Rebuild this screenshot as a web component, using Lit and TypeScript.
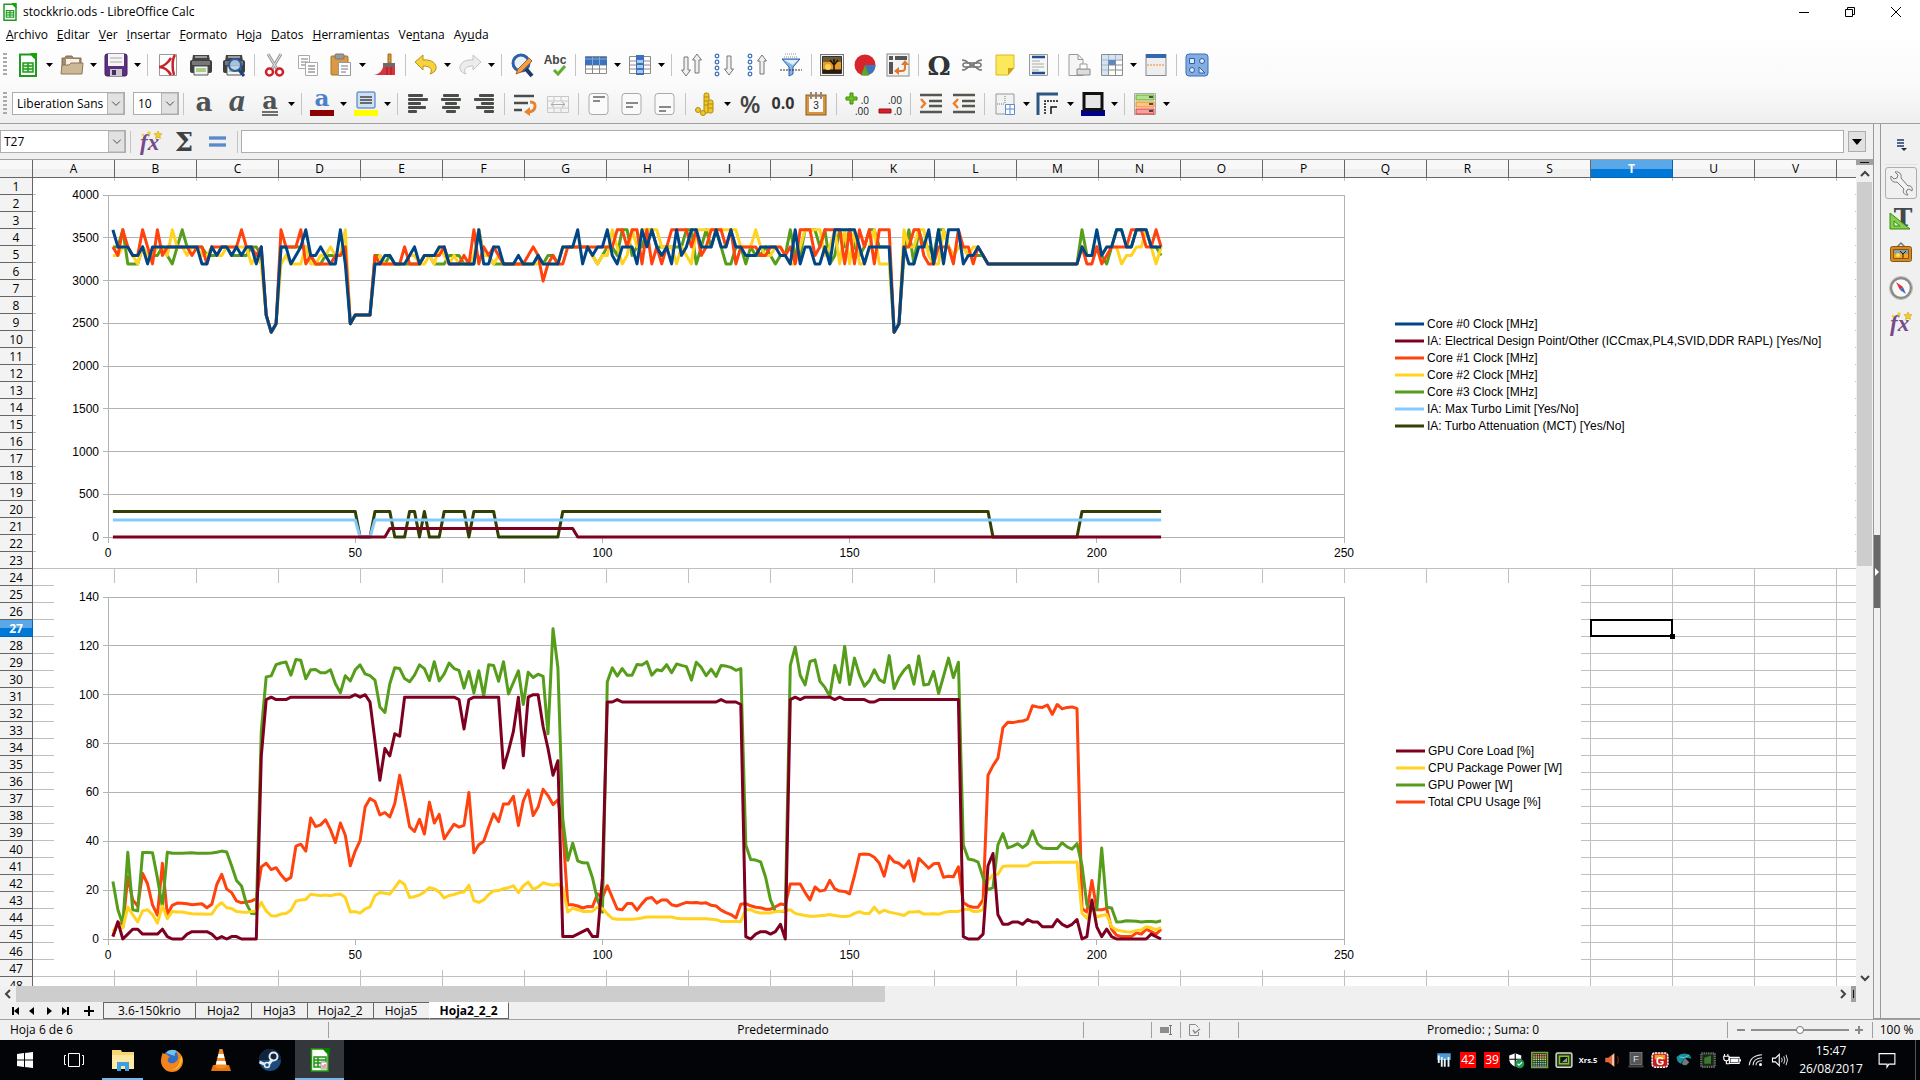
import { LitElement, html, svg, css, nothing } from "lit";
import { customElement, property } from "lit/decorators.js";
import { classMap } from "lit/directives/class-map.js";

/* ---------- measurements ---------- */

/** Expands "34*3 33" to [34, 34, 34, 33]. */
const run = (text: string, factor = 1): number[] =>
  text.trim().split(/\s+/).flatMap((part) => {
    const [value, count] = part.split("*");
    return Array(Number(count ?? 1)).fill(Number(value) * factor);
  });

const core0 = run(`36 34*3 33*2 34 32 34*2  34*8 32*2  34 33 34*2 33 34 33 34*2 32
 34 26 24 25 34*2 32 33 34 36  33*2 34 33 32*2 36 32 25 26  26*3 32*2 33*2 32*3
 33 34 32 33*3 34*2 32*2  32*4 36 32*2 34*2 32  32*2 33 32*3 33 32*3  32 34*3 36 32 34 33 34*2
 36 33 32 34*3 32 36 34 36  34 33 34 32 36 33 34 36*2 34  34*2 36 34*2 36 34*2 33*2
 33 34*4 33*2 32 36 32  34*2 32*2 34 32 36*4  36 34 32 34*5 24 25  34 32*2 34*2 36 32 36 32 36
 36*2 32 33*2 34 33 32*3  32*10  32*6 34 33*2 36  33 34*2 36*2 34*2 36*3 34*3`, 99.8);

const core1 = run(`34 33 36 34 33*2 36 34 32 36  33 34*5 33 34*2 32  34*6 36 34*2 33
 34 26 24 25 36 34*3 36 32  33 32*4 33*2 34 25 26  26*3 33 32*5 34
 32*3 33*4 34 32*2  32 33 32 36 32 34 33 34 33 32  32*4 33 34 33 30 32 33  32*2 34*8
 34*2 36*2 34 36*2 32 36 32  34 32 34 36*4 34 36 33  34 36*3 34 36 32 34*3
 34 33*2 34*3 33 34 32 36  36*2 33 34 36*4 32 36  32 36 34 36 32 36*3 24 25  34*2 36*2 33 32*2 34*3
 32 36 34*2 32 34 33 32*3  32*10  32*6 34 32*2 34  32 33 34*4 36*3 34*2 36 34`, 99.8);

const core2 = run(`33*2 34*2 33 32 34 33*2 34  34 33 36 34*2 33 34*2 33*2  34 33*2 34*5 32 33
 32 26 24 25 32 33 32*3 34  32*2 33*2 34 33*2 36 25 26  26*3 32 33 32*5
 33*2 32*2 33 32 34 33 32 33  32*3 33 36 33*2 32 33 32  32*10  32 34*6 33 32 33
 33 36 34 32 33 36 34 36*3  36 34*3 32 34 33 32 36*2  36*7 34*3
 36 34 33*2 34*2 33 32*2 34  36*4 33 34 36 32 36 32  36 32*2 34 36 32*3 24 25  36 34*2 36*2 33 32*2 36 34
 33 34*2 33 34*2 33 32*3  32*10  32*6 34 33*2 34  33 34*3 32 33*2 34*2 36 34 32 34`, 99.8);

const core3 = run(`34*2 36 32*3 34 33*3  34 33 32 34 36 34*4 33  33*2 34*2 33*4 34*2
 33 26 24 25 34*6  33 32*2 33*4 34 25 26  26*3 33*2 32 33 32*3
 32*3 33*2 32*3 33*2  33 32*3 36 33*2 32*3  32*6 33 32 33*2  32 34*6 33 32 33
 34*2 33 36*2 33 34*2 36*2  34*6 36*2 32 34  36 34 36 34 32*2 34*2 32 34
 33*2 34 33 32 33*2 36 33*2  36*3 34 36 32 33 36 34 36  34 33 34 36*2 34*3 24 25  33 36 32 36 34*2 33 36*2 34
 33 34*2 33*4 32*3  32*10  32*6 36 33*2 34  33 32 34 36*2 34*2 36*3 34*2 33`, 99.8);

const designPoint = run("0*56 100*38 0*119");
const maxTurbo = run("200*50 0*3 200*160");
const attenuation = run("300*50 0*3 300*4 0*3 300*2 0 300 0*3 300*5 0 300*5 0*13 300*87 0*18 300*17");

const gpuLoad = run(`1 7 0 2 4 4 2*4  4 1 0*3 2 3*4  2 0 1 0 1 1 0*4
 75 98 99 98*3 99*4  99*9 100  99 100 97 81 65 78 75 84 83 99  99*10
 98 86 98 99*6 70  77 85 99 75 99 100 100 87 78 67  73 1 1 1 2 3 4 1 1 25
 97 97 98 97*7  97*10  97*3 98 97*3 96 1 0  2 3 3 2 3 6 0 98 99 98
 99*6 98 99 98*2  98*3 97*2 98*5  98*10  98*2 1 0*3 2 30 35 10
 6 6 7 7 6 8 7 7 5 5  5 8 6 5 6 8 0 1 16 5  1 4 1 0*7 2 1 0`);

const gpuPower = run(`23.5 12 6 35.5 12 11.5 35.4 35.4 35.3 25  13 35.5 35.1*3 35.2 35.3 35.1*3
 35.2 35.5 36 35.6 30 24 21.7 14.5 10.5 10.3  85 107.3 107.7 112.3 113 113.4 108 114.4 114.1 106.5
 110.2 110.3 109 109 110.2 104.5 100.8 107.8 105.6 110.2  112.2 108.5 107.8 106 95 92.7 104.5 111 110.7 106.6
 105.3 108 112.2 110.7 105.8 113.5 105.6 108.5 113 110.7  110 102.7 109.5 100.8 109.8 99.5 112.3 112 105.5 113.5
 100.3 105 109.8 96 109.2 107 108.4 107.5 84 127  111 49 32.2 39.2 32 31.2 31.1 25 16 11
 105.3 111 107.6 110.7 108 108 112.4 112.2 113.5 108  110.2 109.8 112.3 109 112.6 112 111.5 106 113.3 111.2
 107.8 110.5 107.5 112 111.7 111.2 110 110.7 38.5 32.6  32.3 31.6 25.3 16 11.2 11.3 11.4 112 119.5 108
 104 113.6 114.3 105.5 103 99.5 112 105 119.8 104.2  115 108 103.5 105.8 110.2 106.2 105 116 102.5 107
 110 112 104.3 115.8 104 104.3 109.5 100.5 107.5 115  107 113.3 38.5 32.7 32.4 31.5 25 20.2 21 38.5
 43.2 37.3 38 39 37.4 39 44.3 39 37.3 37  37 37 39.4 37.7 36.8 39 30 14 12 12
 37.2 13 12.7 7 7.1 7.5 7.4 7.3 7 7.2 7.2 6.9 7.5`);

const cpuUsage = run(`1 7 5 25.5 16 13.5 26.8 22.5 14 9.8  31 10 13.8 14.7 14.6 14.4 14 14.2 14.4 12.8
 14.2 22.3 26.5 20.5 19 15.6 14.8 15.2 15.5 16.5  29.5 31 28.4 29.2 26.3 24 25.2 38 38.8 36
 49.5 46 46.7 48.8 44.8 39.5 47.5 42.5 30 36  40.3 54 57.5 56.3 50.8 51.8 50 55.5 67 57
 46 44 49 43 56 47.5 51 41 44 47  45.8 46.5 60 35.3 38.6 40 45.8 51.2 48 55.3
 55.3 58.4 46.5 56.5 61 50.5 54 61.3 58.7 55  57 45 14 14 13.5 12.7 13.3 13.2 18.5 17
 21.8 17 12.3 12 14.5 14.5 11.8 14.5 16.6 17  14.7 16 16 14 13.5 14.3 15 14.8 15 14.6
 14.8 13.8 13.5 11.8 10.8 10 8.6 14.2 14.5 13.6  13 12.8 12.2 12.2 13.2 14.3 14 22.5 22.5 22.5
 19 16 21.3 19.6 20 24 20.5 19.6 19.5 18.5  26 34.6 34.8 34.6 33.5 31 25.7 34 31.6 31
 29.2 32 23.7 33 31 29 30.8 31 25.3 25.7  25.5 29.5 15 13.5 13 13 16 67 71 74
 86.5 88.7 88.6 89 89.2 90 95.5 95 94.8 95.8  92 96 94.2 94.8 95 94.3 12.5 11 24 12
 12 12.5 4 1.5 1 1 1 2.5 2 4 3 2 4`);

const cpuPower = run(`3 6 4.5 13 10 7 11.5 12 10 6.5  13.5 8.3 11.3 11 11 10.7 10.3 10.2 10.2 10.1
 10.2 13.3 14.8 12.8 12.5 11.3 11 10.9 11.3 11.5  15 11.5 9.5 9.4 10.2 10.4 11.8 15.5 16 16.2
 18.3 18 17.8 18 17.7 18.2 18.4 17 11 11.2  10.6 12.3 13.2 17.8 19 18.7 18.4 21 23.8 22.3
 17 17.3 18 19.3 21 20.5 19.3 16.8 17.8 18.2  18.9 19.3 22 15.7 15 16 18.2 19.7 19.8 20.6
 21 21.8 19 21.7 23.3 20.3 21.3 23 22.4 22  22.5 21 11 12.6 12 11.3 11.3 11.4 13 12.5
 10.3 8.4 8.1*4 8.3 8.6 9 9  9*4 8.5 8.3*5  8.3 8.1 7.9 7.2*5 12 12  11 10.7*3 11.2 11.3 11.6 12 10.5 10
 9.6 9.3 9.3 9.5 9.7 10 9.6 9.3 9.2 9.4  10.5 11.2 10.4 10.5 13 10.7 11.8 11 10.6 10.2
 9.6 11 11 11.3 10.2 10.2 10.3 10.1 10.8 11.2  11.2 11.3 12 12.3 11.3 11.3 12 24 26.3 26.5
 29.7 29.9*4 30 31.2 31.3*3  31.4*5 31.5 10.5 8.5 13 9  9.6 10 5 3.7 3.3 3 2.9 3.5 3.7 5 4.6 3.8 4.7`);

interface Series { name: string; color: string; data: number[]; }

const clockSeries: Series[] = [
  { name: "Core #0 Clock [MHz]", color: "#004586", data: core0 },
  { name: "IA: Electrical Design Point/Other (ICCmax,PL4,SVID,DDR RAPL) [Yes/No]", color: "#7e0021", data: designPoint },
  { name: "Core #1 Clock [MHz]", color: "#ff420e", data: core1 },
  { name: "Core #2 Clock [MHz]", color: "#ffd320", data: core2 },
  { name: "Core #3 Clock [MHz]", color: "#579d1c", data: core3 },
  { name: "IA: Max Turbo Limit [Yes/No]", color: "#83caff", data: maxTurbo },
  { name: "IA: Turbo Attenuation (MCT) [Yes/No]", color: "#314004", data: attenuation },
];

const powerSeries: Series[] = [
  { name: "GPU Core Load [%]", color: "#7e0021", data: gpuLoad },
  { name: "CPU Package Power [W]", color: "#ffd320", data: cpuPower },
  { name: "GPU Power [W]", color: "#579d1c", data: gpuPower },
  { name: "Total CPU Usage [%]", color: "#ff420e", data: cpuUsage },
];

/* ---------- chart ---------- */

@customElement("sheet-chart")
class SheetChart extends LitElement {
  @property({ attribute: false }) series: Series[] = [];
  @property({ type: Number }) width = 1000;
  @property({ type: Number }) max = 100;
  @property({ type: Number }) step = 20;
  @property({ type: Number }) left = 72;
  @property({ type: Number }) keyX = 1359;
  @property({ type: Number }) keyY = 143;

  static styles = css`
    :host { display: block; background: #fff; }
    svg { display: block; }
    .grid { stroke: #b3b3b3; stroke-width: 1; shape-rendering: crispEdges; fill: none; }
    .line { fill: none; stroke-width: 3; stroke-linejoin: round; }
    text { font: 12px "Liberation Sans", Arial, sans-serif; fill: #000; }
    .end { text-anchor: end; }
    .mid { text-anchor: middle; }
  `;

  render() {
    const top = 14, w = 1236, h = 342, bottom = top + h, L = this.left;
    const x = (v: number) => L + (v / 250) * w;
    const y = (v: number) => bottom - (v / this.max) * h;
    const rows = Array.from({ length: this.max / this.step + 1 }, (_, i) => i * this.step);
    const path = (d: number[]) => d.map((v, i) => `${x(i + 1).toFixed(1)},${y(v).toFixed(1)}`).join(" ");
    return html`<svg width=${this.width} height="387" role="img" aria-label=${this.series.map((s) => s.name).join(", ")}>
      ${rows.map((v) => svg`
        <line class="grid" x1=${L - 5} x2=${L + w} y1=${y(v)} y2=${y(v)}></line>
        <text class="end" x=${L - 9} y=${y(v) + 4}>${v}</text>`)}
      <line class="grid" x1=${L} x2=${L} y1=${top} y2=${bottom}></line>
      <line class="grid" x1=${L + w} x2=${L + w} y1=${top} y2=${bottom}></line>
      ${[0, 50, 100, 150, 200, 250].map((v) => svg`
        <line class="grid" x1=${x(v)} x2=${x(v)} y1=${bottom} y2=${bottom + 6}></line>
        <text class="mid" x=${x(v)} y=${bottom + 20}>${v}</text>`)}
      ${[...this.series].reverse().map((s) => svg`<polyline class="line" stroke=${s.color} points=${path(s.data)}></polyline>`)}
      ${this.series.map((s, i) => svg`
        <line class="line" stroke=${s.color} x1=${this.keyX} x2=${this.keyX + 29} y1=${this.keyY + 17 * i} y2=${this.keyY + 17 * i}></line>
        <text x=${this.keyX + 32} y=${this.keyY + 4 + 17 * i}>${s.name}</text>`)}
    </svg>`;
  }
}

/* ---------- icons, drawn on a 24 x 24 field ---------- */

const page = svg`<path d="M5 1.500h14v21H5z" fill="#fff" stroke="#999"/>`;
const printer = svg`
  <path d="M4 2h16l1 6H3z" fill="#444"/><path d="M6 4h12" stroke="#bbb" stroke-width="1.500"/>
  <rect x="1" y="7" width="22" height="13" rx="2" fill="#3c3f40"/><rect x="3" y="8" width="18" height="4" fill="#777"/>
  <path d="M5 13h14v9H5z" fill="#f2f2f2" stroke="#555"/><rect x="7" y="15" width="10" height="4" fill="#a7cf8b"/>`;
const lines = (rows: number[][]) =>
  rows.map(([x, w], i) => svg`<rect x=${x} y=${2 + i * 4} width=${w} height="3" rx="1" fill="#4a4d4a"/>`);
const sheetGrid = svg`<path d="M1.500 3.500h21v17h-21zM1.500 8h21M1.500 12h21M1.500 16h21M8.500 3.500v17M15.500 3.500v17" fill="#fff" stroke="#8b8b8b"/>`;
const fx = svg`
  <text x="1" y="20" font-family="Liberation Serif" font-style="italic" font-weight="bold" font-size="23" fill="#77498a">fx</text>
  <path d="M19 1l1.200 2.500 2.800.3-2 2 .4 2.700L19 7.200l-2.400 1.300.4-2.700-2-2 2.800-.3z" fill="#f4cf26" stroke="#c9a316" stroke-width=".6"/>
  <circle cx="10" cy="3" r="1.800" fill="#f4cf26"/><circle cx="4" cy="5" r="1.200" fill="#f4cf26"/>`;
const upArrow = (x: number, y: number) =>
  svg`<path d="M${x} ${y}l4.500 6h-2.500v13h-4V${y + 6}h-2.500z" fill="#f0f0f0" stroke="#777"/>`;
const downArrow = (x: number, y: number) =>
  svg`<path d="M${x} ${y + 19}l4.500-6h-2.500V${y}h-4v13h-2.500z" fill="#f0f0f0" stroke="#777"/>`;
const beads = svg`${[3, 9, 15, 21].map((y) => svg`<circle cx="4" cy=${y} r="1.800" fill="#fff" stroke="#3f74bd" stroke-width="1.300"/>`)}`;
const cellBox = (y: number) => svg`<rect x="2" y="1.500" width="19" height="21" rx="3" fill="#fafafa" stroke="#aaa"/>
  <path d="M6 ${y}h12M6 ${y + 4}h7" stroke="#666" stroke-width="1.500"/>`;
const letterA = (italic: boolean, color = "#4e5253", y = 19, size = 26) => svg`
  <text x="12" y=${y} text-anchor="middle" font-family=${italic ? "Liberation Serif" : "DejaVu Serif, Liberation Serif"} font-weight="bold" font-size=${italic ? size + 6 : size}
    font-style=${italic ? "italic" : "normal"} fill=${color}>a</text>`;

const icons: Record<string, unknown> = {
  doc: svg`<path d="M4 1.500h11.500L20 6v17H4z" fill="#fff" stroke="#1f9a1f" stroke-width="2"/><path d="M14 0h7v7z" fill="#18a303"/>
    <path d="M7 10h10v9H7zM7 13h10M7 16h10M12 10v9" fill="#d8f0d0" stroke="#1f9a1f" stroke-width="1.500"/>`,
  folder: svg`<path d="M2 20V5h3l1-2h6l1 2h8v15z" fill="#a38c6d" stroke="#826d50"/><path d="M6 6h13v6H6z" fill="#f5f0e5"/>
    <path d="M1 21l1-9h7l2-2h12l-1 11z" fill="#cdb797" stroke="#8c7759"/>`,
  save: svg`<rect x="1" y="1" width="22" height="22" rx="2" fill="#5c2d82" stroke="#3e1c5c"/><path d="M4 1h16v12H4z" fill="#f5f5f5"/>
    <path d="M6 5h12M6 9h12" stroke="#aaa"/><path d="M6 16h12v7H6z" fill="#c9c9c9"/><path d="M8 17h4v5H8z" fill="#42305a"/>`,
  pdf: svg`<path d="M3.500 1.500h17v21h-17z" fill="#fff" stroke="#999"/><path d="M19 2c-3 4-3 14-1 20M15 5C12 10 7 14 3 14c5 0 9 3 12 8" stroke="#c8232b" stroke-width="2.500" fill="none"/>`,
  print: printer,
  preview: svg`${printer}<circle cx="13" cy="12" r="6" fill="#b7d3ef" fill-opacity=".8" stroke="#2b5ca5" stroke-width="2"/><path d="M17 17l5 6" stroke="#1d4383" stroke-width="3"/>`,
  cut: svg`<path d="M5 1l9 15M18 1L9 16" stroke="#999" stroke-width="3"/><path d="M5 1l9 15M18 1L9 16" stroke="#e6e6e6"/>
    <circle cx="6.500" cy="19" r="3.500" fill="none" stroke="#cf1f27" stroke-width="2.500"/><circle cx="16.500" cy="19" r="3.500" fill="none" stroke="#cf1f27" stroke-width="2.500"/>`,
  copy: svg`<path d="M2.500 2.500h11v13h-11z" fill="#fff" stroke="#aaa"/><path d="M5 6h7M5 9h7M5 12h7" stroke="#777"/>
    <path d="M9.500 9.500h12v13h-12z" fill="#fff" stroke="#aaa"/><path d="M12 13h7M12 16h7M12 19h7" stroke="#666"/>`,
  paste: svg`<rect x="2" y="3" width="17" height="19" rx="1" fill="#d99a45" stroke="#a8701f"/><rect x="6" y="1" width="9" height="5" rx="1" fill="#999" stroke="#777"/>
    <path d="M9.500 9.500h12v13h-12z" fill="#fff" stroke="#999"/><path d="M12 13h7M12 16h7M12 19h5" stroke="#777"/>`,
  brush: svg`<path d="M15 1h3v9h-3z" fill="#d99a3d" stroke="#9b6a1e"/><path d="M10 10h12v4H10z" fill="#6b6b6b"/>
    <path d="M10 14h12v8H1c5-1 8-4 9-8z" fill="#d8343d"/><path d="M14 14v8M18 14v8" stroke="#9e1b23"/>`,
  undo: svg`<path d="M1 9l8-7v5c9-1 14 4 13 9-1 3-3 4-6 5 3-4 1-8-7-8v4z" fill="#f5d23e" stroke="#b8931a"/>`,
  redo: svg`<path d="M23 9l-8-7v5C6 6 1 11 2 16c1 3 3 4 6 5-3-4-1-8 7-8v4z" fill="#ececec" stroke="#c4c4c4"/>`,
  find: svg`<circle cx="11" cy="10" r="8" fill="#e8f1fa" stroke="#2f5fa8" stroke-width="3"/><path d="M16 16l6 7" stroke="#1d3768" stroke-width="4"/>
    <path d="M6 21l2-5L19 5l3 3L11 19z" fill="#f2a044" stroke="#b05f14"/>`,
  spell: svg`<text x="12" y="11" text-anchor="middle" font-family="Liberation Sans" font-weight="bold" font-size="12" fill="#444">Abc</text>
    <path d="M11 17l4 4 7-8" stroke="#5fae2c" stroke-width="3" fill="none"/>`,
  rows: svg`${sheetGrid}<path d="M1 4h22v8H1z" fill="#3a72bd"/><path d="M8.500 4v8M15.500 4v8M1 6h22" stroke="#7fa9de"/>`,
  cols: svg`${sheetGrid}<path d="M8 2h8v20H8z" fill="#3a72bd"/><path d="M9 7h6v3H9zM9 12h6v3H9zM9 17h6v3H9z" fill="#a9c8ec"/>`,
  sort: svg`${downArrow(6, 4)}${upArrow(17, 1)}`,
  sortAsc: svg`${beads}${downArrow(16, 3)}`,
  sortDesc: svg`${beads}${upArrow(16, 2)}`,
  filter: svg`<path d="M6 1h12M5 4h14" stroke="#999" stroke-dasharray="1 1"/><path d="M3 6h18l-7 8v7l-4 2v-9z" fill="#8db6e8" stroke="#2c5fa8"/><path d="M5 7h14l-5 5z" fill="#e2eefb"/><path d="M1 17h22" stroke="#333" stroke-dasharray="2 1"/>`,
  image: svg`<rect x="0.500" y="1.500" width="23" height="21" fill="#f2f2f2" stroke="#777"/><path d="M2.500 3.500h19v17h-19z" fill="#6e5a33" stroke="#333"/>
    <path d="M3 9h18v7H3z" fill="#e89a25"/><circle cx="8" cy="14" r="3" fill="#ffd34d"/><path d="M3 17h18v3H3z" fill="#2b1c0c"/><path d="M14 18v-6l-4-5m4 5l4-5m-4 5V6" stroke="#1c1208" stroke-width="1.500" fill="none"/>`,
  pie: svg`<circle cx="12" cy="12" r="10.500" fill="#d8252c"/><path d="M12 12l10.500 0a10.500 10.500 0 0 1-7 10z" fill="#3f74bd"/><path d="M12 12l4 10.500H8z" fill="#5aa626"/>`,
  pivot: svg`<rect x="1" y="1" width="22" height="22" fill="#f4f4f4" stroke="#888"/><path d="M3 3h4v4H3zM9 3h12v4H9zM3 9h4v12H3z" fill="#555"/>
    <path d="M12 18h4q3 0 3-3v-4" stroke="#e2772a" stroke-width="2" fill="none"/><path d="M13 14v8l-5-4zM15 12h8l-4-5z" fill="#e2772a"/>`,
  omega: svg`<text x="12" y="22" text-anchor="middle" font-family="DejaVu Serif, Liberation Serif" font-weight="bold" font-size="26" fill="#2f3436">Ω</text>`,
  link: svg`<g fill="none" stroke="#777" stroke-width="1.500"><path d="M2 7q4 0 6 3h8q2-3 6-3M2 17q4 0 6-3h8q2 3 6 3"/><rect x="3" y="10" width="8" height="4" rx="2"/><rect x="13" y="10" width="8" height="4" rx="2"/><path d="M9 12h6"/></g>`,
  note: svg`<path d="M3 2h18v13l-6 7H3z" fill="#fbe95b" stroke="#d9b92a"/><path d="M21 15h-6v7z" fill="#c99f1e"/>`,
  header: svg`<path d="M3.500 1.500h18v21h-18z" fill="#f6f6f6" stroke="#999"/><path d="M6 4h13M6 20h13" stroke="#1f4d94" stroke-width="2.500"/><path d="M6 8h8M6 11h12M6 14h12M6 17h7" stroke="#aaa"/>`,
  printArea: svg`<path d="M2 1.500h9l5 5v16H2z" fill="#f5f5f5" stroke="#999"/><path d="M11 1.500v5h5" fill="none" stroke="#999"/>
    <path d="M10 16h13v6H10z" fill="#ddd" stroke="#888"/><path d="M13 11h7v5h-7z" fill="#fff" stroke="#999"/>`,
  freeze: svg`<path d="M1.500 1.500h21v21h-21zM8.500 1.500v21M15.500 1.500v21M1.500 7h21M1.500 12h21M1.500 17h21" fill="#fff" stroke="#8b8b8b"/>
    <path d="M2 2h6v20H2zM8 2h14v5H8z" fill="#b9d2ef" fill-opacity=".6"/><path d="M9 7h6v5H9z" fill="#5a88c8"/>`,
  split: svg`<rect x="2" y="1.500" width="20" height="21" fill="#eee" stroke="#888"/><path d="M2 1h20v4H2z" fill="#3368ad"/><path d="M3 12h18" stroke="#f08a24" stroke-dasharray="2 1"/>`,
  shapes: svg`<rect x="1" y="1" width="22" height="22" rx="3" fill="#84aee2" stroke="#3b6fb5"/><g fill="#dce9f8" stroke="#2f5fa8">
    <path d="M4.500 5.500h5v5h-5z"/><circle cx="17" cy="8" r="2.500"/><circle cx="7" cy="17" r="2.500"/><path d="M14 14v6h6z"/></g>`,

  bold: letterA(false), italic: letterA(true),
  underline: svg`${letterA(false, "#4e5253", 17, 24)}<path d="M4 20h16M4 23h16" stroke="#444" stroke-width="1.500"/>`,
  fontColor: svg`${letterA(false, "#4a80cb", 14, 23)}<path d="M0 18h24v6H0z" fill="#8b0000"/>`,
  highlight: svg`<rect x="3" y="0" width="18" height="16" rx="1" fill="#cfe0f5" stroke="#3b6fb5"/><path d="M6 5h12M6 8h12M6 11h12" stroke="#444" stroke-width="1.500"/><path d="M0 18h24v6H0z" fill="#ffff00"/>`,
  left: lines([[2, 15], [2, 20], [2, 13], [2, 18], [2, 9]]),
  center: lines([[4, 16], [2, 20], [6, 12], [3, 18], [7, 10]]),
  right: lines([[7, 15], [2, 20], [9, 13], [4, 18], [12, 10]]),
  wrap: svg`<path d="M1 4h20M1 11h14M1 18h8" stroke="#4a4d4a" stroke-width="2.500"/><path d="M17 10q6 0 5 5t-7 5" fill="none" stroke="#e8822c" stroke-width="3"/><path d="M17 15v9l-6-4z" fill="#e8822c"/>`,
  merge: svg`<path d="M1.500 4.500h21v16h-21zM1.500 9h21M1.500 16h21M8 4.500V9M15 4.500V9M8 16v4M15 16v4" fill="none" stroke="#c8c8c8"/><path d="M5 12.500h14M8 10l-3 2.500 3 2.500M16 10l3 2.500-3 2.500" stroke="#aaa" fill="none"/>`,
  top: cellBox(5), middle: cellBox(11), bottom: cellBox(15),
  currency: svg`<g fill="#f0c929" stroke="#b08a10"><rect x="10" y="1" width="5" height="20" rx="2"/><rect x="14" y="8" width="5" height="13" rx="2"/><circle cx="4" cy="18" r="2.500"/><circle cx="9" cy="21" r="2.500"/></g>
    <path d="M10 5h5M10 9h4M10 13h4M14 12h5M14 16h5" stroke="#b08a10"/>`,
  percent: svg`<text x="12" y="21" text-anchor="middle" font-family="Open Sans" font-weight="600" font-size="24" fill="#444">%</text>`,
  number: svg`<text x="12" y="17" text-anchor="middle" font-family="Open Sans" font-weight="bold" font-size="16" fill="#333">0.0</text>`,
  date: svg`<rect x="2" y="3" width="20" height="20" fill="#d99440" stroke="#8f5d1a"/><path d="M5 5h14v15H5z" fill="#fafafa"/><path d="M7 0v7M12 0v7M17 0v7" stroke="#888" stroke-width="2"/>
    <text x="12" y="17" text-anchor="middle" font-family="Liberation Sans" font-size="10" fill="#222">3</text>`,
  addDec: svg`<path d="M5 1h3v4h4v3H8v4H5V8H1V5h4z" fill="#6cc31f" stroke="#3e8a0a"/>
    <text x="24" y="12" text-anchor="end" font-family="Open Sans" font-size="10" fill="#222">.0</text><text x="24" y="23" text-anchor="end" font-family="Open Sans" font-size="10" fill="#222">.00</text>`,
  delDec: svg`<path d="M1 17h12v4H1z" fill="#d6212a" stroke="#9a1018"/>
    <text x="24" y="12" text-anchor="end" font-family="Open Sans" font-size="10" fill="#222">.00</text><text x="24" y="23" text-anchor="end" font-family="Open Sans" font-size="10" fill="#222">.0</text>`,
  indent: svg`<path d="M1 3h22M10 9h13M10 14h13M1 20h22" stroke="#55584f" stroke-width="2.500"/><path d="M2 7l4 4.500L2 16" stroke="#e8822c" stroke-width="2.500" fill="none"/>`,
  outdent: svg`<path d="M1 3h22M10 9h13M10 14h13M1 20h22" stroke="#55584f" stroke-width="2.500"/><path d="M6 7l-4 4.500L6 16" stroke="#e8822c" stroke-width="2.500" fill="none"/>`,
  border: svg`<path d="M3 2h18v20H3z" fill="#f2f2f2" stroke="#999"/><path d="M12 4v8M4 12h8" stroke="#777" stroke-dasharray="1 1"/><path d="M12.500 12.500h9v10h-9zM17 12.500v10M12.500 17h9" fill="#fff" stroke="#5d8ccb"/>`,
  borderStyle: svg`<path d="M1 23V2h20" stroke="#2d5584" stroke-width="3" fill="none"/><path d="M8 22V9h14" stroke="#111" stroke-width="1.500" fill="none" stroke-dasharray="2 1"/><path d="M14 22v-7h6" stroke="#111" stroke-width="1.500" fill="none"/>`,
  borderColor: svg`<path d="M0 18h24v6H0z" fill="#00008b"/><rect x="3" y="1.500" width="18" height="16" fill="#e6e6e6" stroke="#111" stroke-width="3"/>`,
  conditional: svg`<path d="M1.500 1.500h21v21h-21z" fill="#fff" stroke="#aaa"/><rect x="3" y="3" width="18" height="5" fill="#b4e08c" stroke="#5fae2c"/><rect x="3" y="10" width="18" height="5" fill="#fbc77d" stroke="#e8822c"/>
    <rect x="3" y="17" width="18" height="5" fill="#f6a0a0" stroke="#dc3a3a"/><path d="M16 5h4M16 12h4M16 19h4" stroke="#222" stroke-width="1.500"/>`,

  fx,
  sum: svg`<text x="12" y="21" text-anchor="middle" font-family="DejaVu Serif, Liberation Serif" font-weight="bold" font-size="26" fill="#3e4244">Σ</text>`,
  equals: svg`<path d="M4 8h17M4 15h17" stroke="#2f66b3" stroke-width="3"/><path d="M4 8h17M4 15h17" stroke="#7fb0ec"/>`,

  menu: svg`<path d="M8 8h7M8 11h7M8 14h7" stroke="#223a66" stroke-width="1.500"/><path d="M12 16h6l-3 3z" fill="#1c2b4a"/>`,
  wrench: svg`<path d="M2 5l3 3 3-1 1-3-3-3c4-1 7 2 6 6l7 8c3-1 5 2 4 5l-3-2-2 1-1 2 2 3c-4 0-6-3-4-6L8 11C4 12 1 9 2 5z" fill="#f2f2f2" stroke="#777"/>`,
  styles: svg`<text x="14" y="20" text-anchor="middle" font-family="DejaVu Serif, Liberation Serif" font-weight="bold" font-size="25" fill="#44484a">T</text>
    <path d="M1 7v16h20z" fill="#84cf4c" stroke="#3b8a14"/><path d="M5 15v5h6z" fill="#dff3cf" stroke="#3b8a14"/>`,
  gallery: svg`<path d="M8 6l4-4 4 4" fill="none" stroke="#777" stroke-width="1.500"/><rect x="1.500" y="5.500" width="21" height="15" rx="2" fill="#d18a26" stroke="#8a5510"/>
    <path d="M4.500 8.500h15v9h-15z" fill="#8aa0a8" stroke="#8a5510"/><path d="M5 13h14v4H5z" fill="#f5a623"/><circle cx="9" cy="14" r="2" fill="#ffe14d"/><path d="M14 17v-4l-3-3m3 3l3-3" stroke="#2a1a08" fill="none"/>`,
  compass: svg`<circle cx="12" cy="12" r="10" fill="#f8f8f8" stroke="#8b8b85" stroke-width="2.500"/><circle cx="12" cy="12" r="11.500" fill="none" stroke="#bbb"/>
    <path d="M7 6l7 5-3 3z" fill="#dd2f35"/><path d="M17 18l-6-4 3-3z" fill="#3d6fb6"/>`,

  windows: svg`<path d="M4 6l7-1v6.500H4zM12 5l8-1v7.500h-8zM4 12.500h7V19l-7-1zM12 12.500h8V20l-8-1z" fill="#fff"/>`,
  taskView: svg`<path d="M6.500 5.500h11v13h-11z M4 7.500H2.500v9H4M20 7.500h1.500v9H20" fill="none" stroke="#fff"/>`,
  explorer: svg`<path d="M1 2h9l1 2h12v17H1z" fill="#f7d774"/><path d="M1 7h22v14H1z" fill="#ffe9a2"/><path d="M6 23v-9h12v9h-4v-5h-4v5z" fill="#3aa0e3"/>`,
  firefox: svg`<circle cx="12" cy="12" r="10" fill="#2c6fc4"/><path d="M6 5c3-4 9-4 12-1-3 0-4 2-3 4z" fill="#6fc4ee"/>
    <path d="M3 4c0 2 1 2 3 2l4 3c-3 1-3 5 0 6 4 1 6-1 8-4 0-4-1-6-2-8 5 2 7 6 7 10a11 11 0 0 1-22 0c0-4 1-6 2-9z" fill="#f2831d"/><path d="M22 8c1 8-3 14-11 14 5-1 9-5 9-11z" fill="#fbc02d"/>`,
  vlc: svg`<path d="M4 17h16l2 6H2z" fill="#e8720c"/><path d="M10.500 1h3L18 19q-6 3-12 0z" fill="#f68b1f"/><path d="M9.500 6h5l1 4h-7zM7.800 13h8.600l.8 3.500H7z" fill="#fff"/>`,
  steam: svg`<circle cx="12" cy="12" r="11" fill="#1b4b7c"/><path d="M1 12a11 11 0 0 1 22 0z" fill="#10243d"/><circle cx="15.500" cy="8.500" r="4" fill="none" stroke="#e4ecf4" stroke-width="2"/>
    <path d="M1.500 14l8 3.500 5-6" stroke="#e4ecf4" stroke-width="3" fill="none"/><circle cx="9" cy="17" r="2.500" fill="#1b4b7c" stroke="#e4ecf4" stroke-width="1.500"/>`,
  calc: svg`<path d="M3.500 1h12L20 6v17H3.500z" fill="#fff" stroke="#18a303" stroke-width="1.500"/><path d="M14 0h8v7z" fill="#0d7a00"/>
    <path d="M6 9h12v10H6zM6 12h12M6 15h12M10 9v10" fill="#dff3d8" stroke="#23901a" stroke-width="1.500"/><path d="M13 14h6v7h-6z" fill="#fff" stroke="#999"/><path d="M15 20v-3M17 20v-4" stroke="#d44"/>`,

  meter: svg`<path d="M3 3h18v9H3z" fill="#4c9ad1"/><path d="M5 6v10M9 8v13M13 10v11M18 8v13" stroke="#eaf4fb" stroke-width="2.500"/>`,
  shield: svg`<path d="M3 6l8-3 8 3v5c0 5-4 8-8 10-4-2-8-5-8-10z" fill="#fff"/><path d="M11 3v18M3 11h16" stroke="#000" stroke-width="1.500"/><circle cx="17" cy="17" r="6" fill="#1b9a4a"/><path d="M14 17l2 2 4-4" stroke="#fff" stroke-width="1.500" fill="none"/>`,
  spectrum: svg`<rect x="1" y="2" width="21" height="20" fill="#1f2b12" stroke="#76a63a" stroke-width="2"/>${[5, 8, 11, 14, 17, 20].map((y, i) =>
    svg`<path d="M3 ${y}h17" stroke=${["#e88", "#eb8", "#dd8", "#8d8", "#8cc", "#a9d"][i]} stroke-width="1.800" stroke-dasharray="2 1"/>`)}`,
  chip: svg`<rect x="1.500" y="2.500" width="21" height="19" rx="2" fill="#333" stroke="#cfe0c0" stroke-width="2"/><rect x="6" y="7" width="12" height="10" fill="#111" stroke="#7ec81e" stroke-width="2"/><path d="M9 15l7-6v6z" fill="#999"/>`,
  xrs: svg`<text x="12" y="16" text-anchor="middle" font-family="Open Sans" font-weight="bold" font-size="10" fill="#fff">Xrs.5</text>`,
  speaker: svg`<path d="M3 9h4l8-6v18l-8-6H3z" fill="#e0683c"/><path d="M12 6l3-3v18l-3-3z" fill="#f6c3a8"/><path d="M19 7q3 5 0 10" stroke="#5a1c0a" stroke-width="2" fill="none"/>`,
  board: svg`<rect x="4" y="2" width="16" height="16" fill="#555" stroke="#888"/><path d="M2 19h20v3H2z" fill="#444"/><text x="12" y="15" text-anchor="middle" font-family="Liberation Sans" font-size="13" fill="#ddd">F</text>`,
  gTool: svg`<rect x="1.500" y="2.500" width="21" height="19" rx="4" fill="#c9181e" stroke="#fff" stroke-width="2" stroke-dasharray="3 1"/><path d="M5 5h14v6H5z" fill="#f0a020"/><text x="12" y="18" text-anchor="middle" font-family="Liberation Sans" font-weight="bold" font-size="14" fill="#fff">G</text>`,
  disc: svg`<path d="M2 8Q11 0 20 6l2 4-9-1-5 8Q2 15 2 8z" fill="#1a8f9c"/><path d="M9 17l4-8 6 6q-5 7-10 2z" fill="#6e7a7c"/><path d="M6 8l7 1 6-4" stroke="#7be0ea" fill="none"/>`,
  cpu: svg`<rect x="3" y="3" width="18" height="18" fill="#142b10" stroke="#666" stroke-width="3" stroke-dasharray="2 1"/><path d="M7 17V9l9-3v11z" fill="#3e7434"/>`,
  battery: svg`<path d="M8.500 8.500h13v8h-13z" fill="none" stroke="#fff" stroke-width="1.500"/><path d="M10 10h10v5H10zM22 11h2v3h-2z" fill="#fff"/><path d="M1 7h7v3q0 3-3.500 3T1 10zM2 4v3M6.500 4v3M4.500 13v4h4" fill="#000" stroke="#fff" stroke-width="1.500"/>`,
  wifi: svg`<g fill="none" stroke="#ddd" stroke-width="1.500"><path d="M3 19Q4 6 20 5"/><path d="M8 19q0-9 12-10"/><path d="M12 19q0-6 8-6"/></g><circle cx="18" cy="18" r="2" fill="#fff"/>`,
  volume: svg`<path d="M2 9.500h4l5-5v15l-5-5H2z" fill="none" stroke="#fff" stroke-width="1.500"/><path d="M14 9q2 3 0 6M17 7q3 5 0 10M20 5q4 7 0 14" fill="none" stroke="#ddd" stroke-width="1.300"/>`,
  action: svg`<path d="M1.500 3.500h21v14h-8l-2.500 4v-4H1.500z" fill="none" stroke="#fff" stroke-width="1.500"/>`,
};

const icon = (name: string, size = 24) =>
  html`<svg width=${size} height=${size} viewBox="0 0 24 24" aria-hidden="true">${icons[name]}</svg>`;

const chevron = html`<svg class="chevron" width="17" height="22" viewBox="0 0 17 22" aria-hidden="true">
  <rect x="0" y="0" width="17" height="22" fill="#e1e1e1" stroke="#adadad"/><path d="M5 9l4 4 4-4" fill="none" stroke="#444"/></svg>`;

/* "name label" entries; "v" marks a drop-down after the button, "|" a separator */
const standardBar = ("doc:Nuevo v folder:Abrir v save:Guardar v | pdf:Exportar_a_PDF print:Imprimir preview:Vista_previa | cut:Cortar copy:Copiar paste:Pegar v brush:Clonar | " +
  "undo:Deshacer v redo:Rehacer v | find:Buscar spell:Ortografía | rows:Fila v cols:Columna v | sort:Ordenar sortAsc:Ascendente sortDesc:Descendente filter:Filtro | " +
  "image:Imagen pie:Gráfico pivot:Tabla_dinámica | omega:Símbolo link:Hiperenlace note:Comentario header:Cabecera | printArea:Área_de_impresión freeze:Inmovilizar v split:Dividir | shapes:Dibujo").split(" ");
const formatBar = ("| bold:Negrita italic:Cursiva underline:Subrayado v | fontColor:Color v highlight:Resaltado v | left:Izquierda center:Centro right:Derecha | wrap:Ajustar merge:Combinar | " +
  "top:Arriba middle:Medio bottom:Abajo | currency:Moneda v percent:Porcentaje number:Número date:Fecha | addDec:Añadir_decimal delDec:Quitar_decimal | " +
  "indent:Aumentar_sangría outdent:Reducir_sangría | border:Bordes v borderStyle:Estilo_de_borde v borderColor:Color_de_borde v | conditional:Formato_condicional v").split(" ");

const menus: [string, number][] = [["Archivo", 0], ["Editar", 0], ["Ver", 0], ["Insertar", 0], ["Formato", 0], ["Hoja", 1], ["Datos", 0], ["Herramientas", 0], ["Ventana", 2], ["Ayuda", 2]];
const columns = "ABCDEFGHIJKLMNOPQRSTUV".split("");
const sheets = ["3.6-150krio", "Hoja2", "Hoja3", "Hoja2_2", "Hoja5", "Hoja2_2_2"];
const tray = ["meter", "42", "39", "shield", "spectrum", "chip", "xrs", "speaker", "board", "gTool", "disc", "cpu", "battery", "wifi", "volume"];

@customElement("app-root")
class AppRoot extends LitElement {
  static styles = css`
    :host { display: block; font: 12px/16px "Open Sans", "Noto Sans", sans-serif; color: #000; }
    * { box-sizing: border-box; }
    button, input, select { font: inherit; color: inherit; border: 0; padding: 0; margin: 0; background: none; border-radius: 0; }
    button { display: flex; align-items: center; justify-content: center; }
    svg { display: block; flex: none; overflow: visible; }
    .app { display: flex; flex-direction: column; height: 100vh; overflow: hidden; background: #f0f0f0; }

    .chrome { background: linear-gradient(#fff 30%, #fafafa 70%, #efefef); border-bottom: 1px solid #a0a0a0; }
    .title { display: flex; align-items: center; height: 24px; padding-left: 1px; gap: 4px; font-size: 12px; }
    .title .name { flex: 1; font-weight: normal; }
    .title button { width: 45px; height: 24px; }
    .title .controls { display: flex; gap: 1px; padding-right: 2px; }
    .menu { display: flex; height: 22px; align-items: center; gap: 9px; padding-left: 6px; }
    .bar { display: flex; align-items: center; height: 38px; padding-left: 3px; }
    .bar.format { height: 39px; }
    .grip { width: 4px; height: 24px; margin-right: 4px; background: repeating-linear-gradient(#aaa 0 2px, transparent 2px 4px); }
    .tool { width: 33px; height: 30px; flex: none; }
    .more { width: 11px; height: 30px; flex: none; }
    .sep { width: 8px; height: 22px; flex: none; background: linear-gradient(#c4c4c4, #c4c4c4) center / 1px 100% no-repeat; }
    .combo { display: grid; grid-template-columns: 1fr 17px; align-items: center; height: 23px; border: 1px solid #adadad; background: #fff; }
    .combo > select, .combo > input { grid-area: 1 / 1 / 2 / 3; width: 100%; height: 21px; padding-left: 4px; appearance: none; outline: none; }
    .combo .chevron { grid-area: 1 / 2; pointer-events: none; height: 21px; overflow: hidden; }
    .font { width: 113px; margin-left: 1px; }
    .size { width: 46px; margin-left: 8px; }
    .format .sep:first-of-type { width: 8px; }

    .main { flex: 1; min-height: 0; display: flex; }
    .doc { flex: 1; min-width: 0; display: flex; flex-direction: column; }
    .formula { height: 36px; flex: none; display: flex; align-items: center; border-bottom: 1px solid #a0a0a0; padding-right: 7px; }
    .cellname { width: 126px; }
    .cellname > input { padding-left: 3px; }
    .formula .line { flex: 1; height: 23px; border: 1px solid #adadad; background: #fff; padding: 0 4px; }
    .expand { width: 18px; height: 21px; margin-left: 4px; border: 1px solid #adadad; background: #e1e1e1; }

    .view { flex: 1; min-height: 0; display: flex; }
    .sheet { flex: 1; min-width: 0; position: relative; overflow: hidden; background: #fff; }
    table { table-layout: fixed; width: 1919px; border-collapse: separate; border-spacing: 0; }
    col { width: 82px; }
    col.first { width: 33px; }
    th, td { padding: 0; border-right: 1px solid #c0c0c0; border-bottom: 1px solid #c0c0c0; }
    td { height: 17px; }
    th { font-weight: normal; line-height: 15px; text-align: center; background: #f3f3f3; border-color: #666; }
    thead th { height: 18px; background: linear-gradient(#f8f8f8 50%, #f0f0f0 50%); }
    th.picked { color: #fff; font-weight: bold; background: linear-gradient(#5ba8e8 50%, #0078d7 50%); border-color: #0067b8; }
    .cursor { position: relative; }
    .cursor::before { content: ""; position: absolute; inset: -1px; border: 2px solid #000; }
    .cursor::after { content: ""; position: absolute; right: -3px; bottom: -3px; width: 5px; height: 5px; background: #000; }
    .clocks { position: absolute; left: 36px; top: 21px; }
    .power { position: absolute; left: 54px; top: 423px; }

    .vscroll { width: 17px; display: flex; flex-direction: column; align-items: center; background: #f0f0f0; }
    .vscroll .handle { width: 17px; height: 5px; border: solid #a0a0a0; border-width: 2px 4px; background: #111; }
    .vscroll button { height: 17px; width: 17px; }
    .vthumb { width: 15px; height: 384px; background: #cdcdcd; }
    .grow { flex: 1; }
    .hscroll { display: flex; height: 16px; align-items: stretch; padding-right: 17px; }
    .hscroll button { width: 16px; }
    .hthumb { width: 869px; background: #cdcdcd; }
    .hscroll .handle { width: 5px; border: solid #a0a0a0; border-width: 4px 2px; background: #111; }
    .tabs { display: flex; height: 17px; align-items: stretch; padding-left: 6px; }
    .tabs .nav { width: 17px; }
    .tabs .add { width: 29px; }
    .tab { height: 17px; min-width: 57px; padding: 0 10px; margin-right: -1px; border: 1px solid #666; line-height: 14px; }
    .tab.wide { padding: 0 14px; }
    .tab.on { background: #fff; border-color: transparent #666 #666 transparent; font-weight: bold; }

    .splitter { width: 8px; border: 1px solid #999; border-width: 0 1px 1px; display: flex; align-items: flex-start; padding-top: 411px; }
    .splitter button { width: 6px; height: 73px; background: #696969; }
    .side { width: 39px; display: flex; flex-direction: column; align-items: center; border-bottom: 1px solid #999; padding-top: 4px; gap: 4px; }
    .side button { width: 32px; height: 32px; }
    .side .deck { border-top: 1px solid #e2e2e2; padding-top: 2px; display: flex; flex-direction: column; gap: 3px; }
    .side .active { border: 1px solid #adadad; border-radius: 3px; }

    .status { display: flex; height: 21px; flex: none; align-items: center; border-top: 1px solid #a0a0a0; }
    .status > span { height: 16px; line-height: 16px; border-right: 1px solid #a0a0a0; white-space: nowrap; flex: none; }
    .status .pos { width: 329px; padding-left: 10px; }
    .status .style { flex: 1; text-align: center; padding-left: 154px; }
    .status .mode { width: 68px; }
    .status .ico { width: 29px; display: flex; align-items: center; justify-content: center; }
    .status .sum { width: 489px; text-align: center; }
    .status .zoom { width: 145px; display: flex; align-items: center; justify-content: center; gap: 3px; }
    .status .zoom button { width: 14px; height: 16px; }
    .status .pct { width: 47px; border: 0; text-align: center; }
    input[type="range"] { appearance: none; width: 98px; height: 14px; background: linear-gradient(#8f8f8f, #8f8f8f) center / 100% 2px no-repeat; }
    input[type="range"]::-webkit-slider-thumb { appearance: none; width: 8px; height: 8px; border: 1px solid #777; border-radius: 50%; background: #fff; }

    .taskbar { display: flex; height: 40px; flex: none; background: #020408; color: #fff; align-items: stretch; }
    .task { width: 49px; border-bottom: 2px solid transparent; border-top: 2px solid transparent; }
    .task.open { width: 41px; margin: 0 4px; border-bottom-color: #76b9ed; }
    .task.current { background: #34373b; border-bottom-color: #76b9ed; margin-left: 1px; }
    .tray { display: flex; align-items: center; margin-left: auto; }
    .tray > button { width: 24px; height: 40px; }
    .temp { width: 16px; height: 16px; background: #f00; font-size: 12px; line-height: 16px; text-align: center; }
    .clock { width: 74px; margin: 0 2px; text-align: center; line-height: 18px; }
    .tray > .action { width: 34px; }
    .edge { width: 5px; height: 40px; border-left: 1px solid #555; margin-left: 11px; }
  `;

  private tools(list: string[]) {
    return list.map((item) => {
      if (item === "|") return html`<span class="sep"></span>`;
      if (item === "v") return html`<button class="more" aria-label="Más opciones"><svg width="7" height="4" aria-hidden="true"><path d="M0 0h7L3.500 4z" fill="#000"/></svg></button>`;
      const [name, label] = item.split(":");
      return html`<button class="tool" aria-label=${label.replace(/_/g, " ")}>${icon(name)}</button>`;
    });
  }

  private glyph(path: string, label: string, cls = "") {
    return html`<button class=${cls} aria-label=${label}><svg width="10" height="10" viewBox="0 0 10 10" aria-hidden="true"><path d=${path}></path></svg></button>`;
  }

  private thin(path: string, label: string, color = "#444", width = 2) {
    return html`<button aria-label=${label}><svg width="10" height="10" viewBox="0 0 10 10" aria-hidden="true"><path d=${path} fill="none" stroke=${color} stroke-width=${width}></path></svg></button>`;
  }

  private grid() {
    return html`<table>
      <colgroup><col class="first">${columns.map(() => html`<col>`)}<col></colgroup>
      <thead><tr><th aria-label="Seleccionar todo"></th>${columns.map((c) => html`<th scope="col" class=${classMap({ picked: c === "T" })}>${c}</th>`)}<th></th></tr></thead>
      <tbody>${Array.from({ length: 48 }, (_, i) => i + 1).map((r) => html`<tr>
        <th scope="row" class=${classMap({ picked: r === 27 })}>${r}</th>
        ${columns.map((c) => html`<td class=${r === 27 && c === "T" ? "cursor" : nothing}></td>`)}<td></td>
      </tr>`)}</tbody>
    </table>`;
  }

  render() {
    return html`<div class="app">
      <header class="chrome">
        <div class="title">${icon("doc", 18)}<span class="name">stockkrio.ods - LibreOffice Calc</span>
          <div class="controls">
            ${this.thin("M0 5.500h10", "Minimizar", "#000", 1)}
            ${this.thin("M.5 2.500h7v7h-7zM2.500 2.500v-2h7v7h-2", "Restaurar", "#000", 1)}
            ${this.thin("M0 0l10 10M10 0L0 10", "Cerrar", "#000", 1)}
          </div>
        </div>
        <nav class="menu">${menus.map(([m, u]) => html`<button><span>${m.slice(0, u)}<u>${m[u]}</u>${m.slice(u + 1)}</span></button>`)}</nav>
        <div class="bar"><span class="grip"></span>${this.tools(standardBar)}</div>
        <div class="bar format"><span class="grip"></span>
          <div class="combo font"><select aria-label="Nombre de letra"><option>Liberation Sans</option></select>${chevron}</div>
          <div class="combo size"><select aria-label="Tamaño de letra"><option>10</option></select>${chevron}</div>
          ${this.tools(formatBar)}
        </div>
      </header>

      <div class="main">
        <div class="doc">
          <div class="formula">
            <div class="combo cellname"><input aria-label="Cuadro de nombre" .value=${"T27"}>${chevron}</div>
            ${this.tools(["|", "fx:Asistente_de_funciones", "sum:Suma", "equals:Función", "|"])}
            <input class="line" aria-label="Línea de entrada">
            <button class="expand" aria-label="Expandir"><svg width="10" height="6" aria-hidden="true"><path d="M0 0h10L5 6z"/></svg></button>
          </div>
          <div class="view">
            <div class="sheet">
              ${this.grid()}
              <sheet-chart class="clocks" .series=${clockSeries} .width=${1819} .max=${4000} .step=${500} .left=${72} .keyX=${1359} .keyY=${143}></sheet-chart>
              <sheet-chart class="power" .series=${powerSeries} .width=${1527} .max=${140} .step=${20} .left=${54} .keyX=${1342} .keyY=${168}></sheet-chart>
            </div>
            <div class="vscroll">
              <span class="handle"></span>${this.thin("M1 7l4-4 4 4", "Subir")}
              <span class="vthumb"></span><span class="grow"></span>${this.thin("M1 3l4 4 4-4", "Bajar")}
            </div>
          </div>
          <div class="hscroll">${this.thin("M7 1L3 5l4 4", "Izquierda")}<span class="hthumb"></span><span class="grow"></span>${this.thin("M3 1l4 4-4 4", "Derecha")}<span class="handle"></span></div>
          <div class="tabs">
            ${this.glyph("M2 1h2v8H2zM9 1v8L4 5z", "Primera hoja", "nav")}${this.glyph("M7 1v8L2 5z", "Hoja anterior", "nav")}
            ${this.glyph("M3 1v8l5-4z", "Hoja siguiente", "nav")}${this.glyph("M6 1h2v8H6zM1 1v8l5-4z", "Última hoja", "nav")}
            ${this.glyph("M4 0h2v4h4v2H6v4H4V6H0V4h4z", "Añadir hoja", "add")}
            ${sheets.map((s, i) => html`<button class=${classMap({ tab: true, wide: i === 0, on: i === 5 })}>${s}</button>`)}
          </div>
        </div>
        <div class="splitter"><button aria-label="Ocultar barra lateral"><svg width="6" height="8" aria-hidden="true"><path d="M1 0l4 4-4 4z" fill="#fff"/></svg></button></div>
        <aside class="side">
          <button aria-label="Configuración">${icon("menu")}</button>
          <div class="deck">
            <button class="active" aria-label="Propiedades">${icon("wrench")}</button>
            <button aria-label="Estilos">${icon("styles")}</button>
            <button aria-label="Galería">${icon("gallery")}</button>
            <button aria-label="Navegador">${icon("compass")}</button>
            <button aria-label="Funciones">${icon("fx")}</button>
          </div>
        </aside>
      </div>

      <footer class="status">
        <span class="pos">Hoja 6 de 6</span><span class="style">Predeterminado</span><span class="mode"></span>
        <span class="ico"><svg width="12" height="10" aria-hidden="true"><path d="M0 2h9v6H0z" fill="#8c8c8c"/><path d="M9 .5h3M10.500 0v10M9 9.500h3" stroke="#777" fill="none"/></svg></span>
        <span class="ico"><svg width="12" height="12" aria-hidden="true"><path d="M9.500 8v3.500h-9V.5h6l3 3" fill="none" stroke="#888"/><path d="M4 6l2 3 5-4" fill="none" stroke="#888" stroke-width="1.500"/></svg></span>
        <span class="ico"></span>
        <span class="sum">Promedio: ; Suma: 0</span>
        <span class="zoom">${this.thin("M1 5h8", "Reducir", "#888")}<input type="range" aria-label="Escala" min="0" max="100" value="50">${this.thin("M1 5h8M5 1v8", "Ampliar", "#888")}</span>
        <span class="pct">100 %</span>
      </footer>

      <div class="taskbar">
        <button class="task" aria-label="Inicio">${icon("windows")}</button>
        <button class="task" aria-label="Vista de tareas">${icon("taskView")}</button>
        <button class="task open" aria-label="Explorador">${icon("explorer")}</button>
        <button class="task" aria-label="Firefox">${icon("firefox")}</button>
        <button class="task" aria-label="VLC">${icon("vlc")}</button>
        <button class="task" aria-label="Steam">${icon("steam")}</button>
        <button class="task current" aria-label="LibreOffice Calc">${icon("calc")}</button>
        <div class="tray">
          ${tray.map((t) => /^\d/.test(t) ? html`<button><span class="temp">${t}</span></button>` : html`<button aria-label=${t}>${icon(t, 18)}</button>`)}
          <div class="clock">15:47<br>26/08/2017</div>
          <button class="action" aria-label="Notificaciones">${icon("action", 18)}</button>
          <span class="edge"></span>
        </div>
      </div>
    </div>`;
  }
}
